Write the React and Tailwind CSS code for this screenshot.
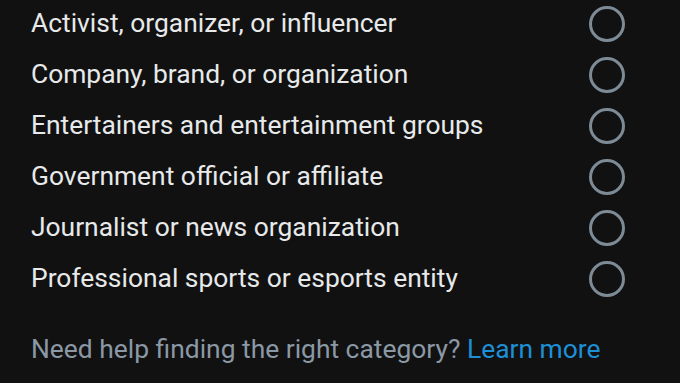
import { useState } from 'react'

const categories = [
  'Activist, organizer, or influencer',
  'Company, brand, or organization',
  'Entertainers and entertainment groups',
  'Government official or affiliate',
  'Journalist or news organization',
  'Professional sports or esports entity',
]

export default function App() {
  const [selected, setSelected] = useState(null)

  return (
    <div className="w-[680px] h-[383px] overflow-hidden bg-[#111111] text-[#e7e9ea]" style={{ fontFamily: 'Roboto, "Noto Sans", sans-serif' }}>
      <div className="-mt-[2px] pl-[31px] pr-[55px]">
        {categories.map((c, i) => (
          <button
            key={c}
            onClick={() => setSelected(i)}
            className="flex h-[51px] w-full items-center justify-between text-left"
          >
            <span className="text-[26.4px] leading-none">{c}</span>
            <span className="flex h-[36px] w-[36px] items-center justify-center rounded-full border-[3px] border-[#7d8b97]">
              {selected === i && <span className="h-[18px] w-[18px] rounded-full bg-[#1d9bf0]" />}
            </span>
          </button>
        ))}
        <p className="mt-[30px] text-[26.4px] leading-[30px] text-[#8b98a5]">
          Need help finding the right category? <a className="text-[#1d8fd6]">Learn more</a>
        </p>
      </div>
    </div>
  )
}
